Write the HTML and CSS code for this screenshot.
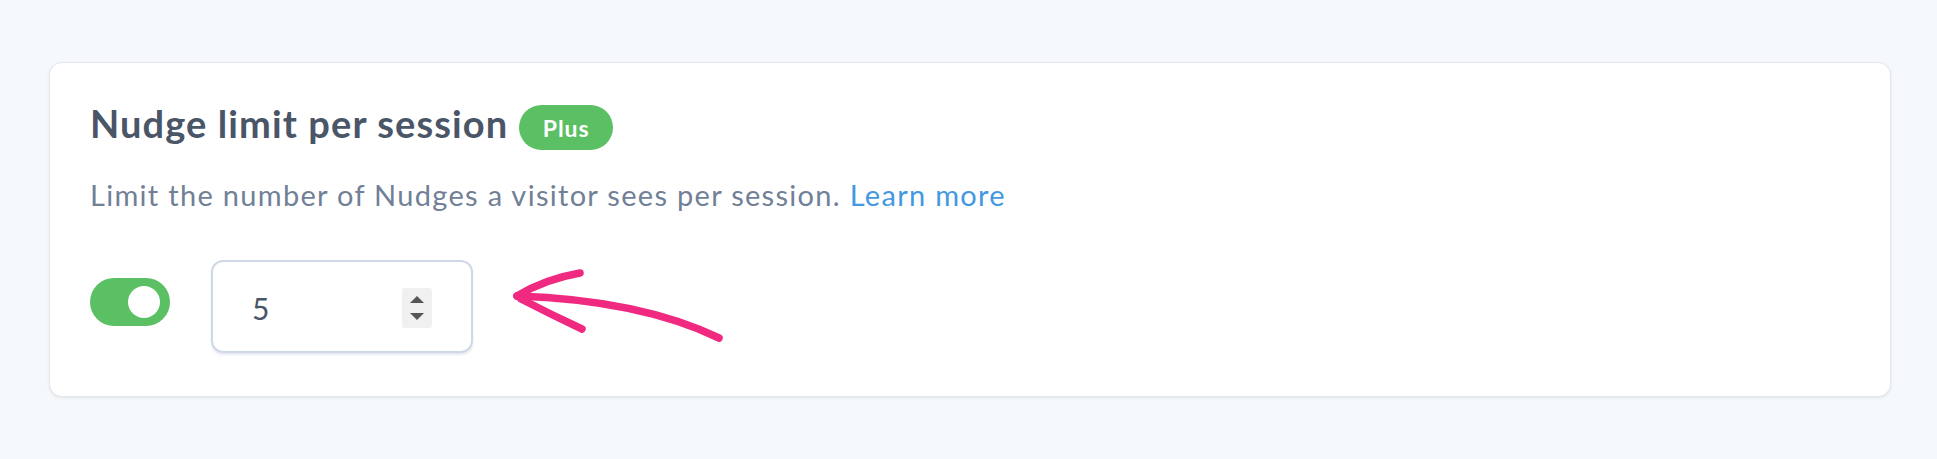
FILE: index.html
```html
<!DOCTYPE html>
<html lang="en">
<head>
<meta charset="utf-8">
<title>Nudge limit per session</title>
<link rel="stylesheet" href="styles.css">
</head>
<body>
<div class="page">
  <section class="card">
    <div class="title-row">
      <h2 class="title">Nudge limit per session</h2>
      <span class="badge">Plus</span>
    </div>
    <p class="desc">Limit the number of Nudges a visitor sees per session. <a class="link" href="#">Learn more</a></p>
    <div class="controls">
      <div class="toggle"><span class="knob"></span></div>
      <div class="number">
        <span class="value">5</span>
        <span class="spinner"><span class="tri up"></span><span class="tri down"></span></span>
      </div>
      <svg class="arrow" width="216" height="93" viewBox="514 259 216 93">
        <path d="M517 295 Q 640 299 719 337" />
        <path d="M517 295 Q 545 278 580 272" />
        <path d="M521 298 Q 552 314 582 328" />
      </svg>
    </div>
  </section>
</div>
</body>
</html>
```

FILE: styles.css
```css
html, body {
  margin: 0;
  padding: 0;
  background: #f6f9fc;
}

.page {
  padding: 62px 46px 66px 49px;
  font-family: Lato, "Liberation Sans", sans-serif;
}

.card {
  background: #ffffff;
  border: 1px solid #e4e7eb;
  border-radius: 13px;
  box-shadow: 0 1px 3px rgba(30, 40, 60, 0.10);
  padding: 37px 40px 43px 40px;
}

.title-row {
  display: flex;
  align-items: flex-start;
  gap: 11px;
}

.title {
  margin: 0;
  font-size: 38px;
  line-height: 46px;
  font-weight: 700;
  letter-spacing: 1.1px;
  color: #4a5568;
}

.badge {
  margin-top: 5px;
  height: 45px;
  width: 94px;
  border-radius: 23px;
  background: #5bbf64;
  color: #ffffff;
  font-size: 23px;
  font-weight: 700;
  letter-spacing: 1px;
  display: flex;
  align-items: center;
  justify-content: center;
}

.desc {
  margin: 25px 0 0 0;
  font-size: 29px;
  line-height: 40px;
  letter-spacing: 1.3px;
  color: #718096;
}

.link {
  color: #4299e1;
  text-decoration: none;
}

.controls {
  margin-top: 45px;
  display: flex;
  align-items: flex-start;
  gap: 41px;
}

.toggle {
  margin-top: 18px;
  width: 80px;
  height: 48px;
  box-sizing: border-box;
  padding: 8px 10px 8px 8px;
  border-radius: 24px;
  background: #5bbf64;
  display: flex;
  justify-content: flex-end;
}

.knob {
  width: 32px;
  height: 32px;
  border-radius: 50%;
  background: #ffffff;
}

.number {
  width: 262px;
  height: 93px;
  box-sizing: border-box;
  border: 2px solid #cfd8e4;
  border-radius: 12px;
  box-shadow: 0 2px 2px rgba(160, 175, 200, 0.25);
  padding: 0 39px 0 39px;
  display: flex;
  align-items: center;
}

.value {
  flex: 1;
  font-size: 30px;
  color: #4a5568;
  padding-top: 2px;
}

.spinner {
  margin-top: 3px;
  width: 30px;
  height: 40px;
  background: #f0f0f0;
  border-radius: 3px;
  display: flex;
  flex-direction: column;
  align-items: center;
  justify-content: center;
  gap: 10px;
}

.tri {
  width: 0;
  height: 0;
  border-left: 7px solid transparent;
  border-right: 7px solid transparent;
}

.tri.up {
  border-bottom: 7px solid #555555;
}

.tri.down {
  border-top: 7px solid #555555;
}

.arrow {
  display: block;
  overflow: visible;
}

.arrow path {
  fill: none;
  stroke: #ef2a80;
  stroke-width: 7.5;
  stroke-linecap: round;
  stroke-linejoin: round;
}
```
